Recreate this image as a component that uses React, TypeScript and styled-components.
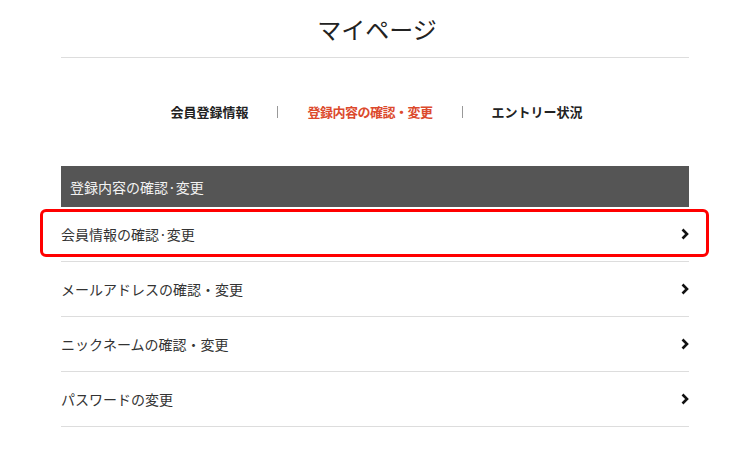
import React from "react";
import styled, { createGlobalStyle } from "styled-components";

const GlobalStyle = createGlobalStyle`
  html, body {
    margin: 0;
    padding: 0;
    background: #fff;
  }
  body {
    font-family: "Noto Sans CJK JP", "Noto Sans", sans-serif;
    color: #333;
  }
`;

const Page = styled.div`
  width: 628px;
  margin: 0 auto;
`;

const Header = styled.header`
  height: 57px;
  border-bottom: 1px solid #ddd;
  display: flex;
  align-items: center;
  justify-content: center;
`;

const Title = styled.h1`
  margin: 0 0 0 4px;
  font-size: 24px;
  font-weight: 400;
  color: #222;
  line-height: 1;
`;

const Nav = styled.nav`
  display: flex;
  align-items: center;
  justify-content: center;
  gap: 29px;
  height: 20px;
  margin: 44px 0 44px 3px;
`;

const NavItem = styled.a<{ $active?: boolean }>`
  font-size: 13px;
  font-weight: 700;
  line-height: 20px;
  text-decoration: none;
  letter-spacing: ${(p) => (p.$active ? "-0.5px" : "0")};
  color: ${(p) => (p.$active ? "#dc4a2d" : "#222")};
`;

const Sep = styled.span`
  width: 1px;
  height: 12px;
  background: #999;
`;

const SectionBar = styled.div`
  height: 41px;
  background: #555;
  color: #f2f2f2;
  font-size: 14px;
  display: flex;
  align-items: center;
  padding-left: 9px;
`;

const List = styled.ul`
  list-style: none;
  margin: 0;
  padding: 0;
`;

const Row = styled.li`
  position: relative;
  height: 54px;
  border-bottom: 1px solid #ddd;
  display: flex;
  align-items: center;
  justify-content: space-between;
  font-size: 14px;
  color: #333;
  padding-bottom: 1px;
  box-sizing: border-box;
  height: 55px;
`;

const Highlight = styled.span`
  position: absolute;
  left: -21px;
  right: -20px;
  top: 2px;
  height: 48px;
  box-sizing: border-box;
  border: 3px solid #f00;
  border-radius: 6px;
  pointer-events: none;
`;

const Chevron = () => (
  <svg width="10" height="12" viewBox="0 0 10 12" style={{ marginRight: "-1px" }}>
    <path d="M2.5 1.5 L7 6 L2.5 10.5" fill="none" stroke="#111" strokeWidth="2.6" />
  </svg>
);

const items = [
  "会員情報の確認·変更",
  "メールアドレスの確認・変更",
  "ニックネームの確認・変更",
  "パスワードの変更",
];

const App = () => (
  <>
    <GlobalStyle />
    <Page>
      <Header>
        <Title>マイページ</Title>
      </Header>
      <Nav>
        <NavItem>会員登録情報</NavItem>
        <Sep />
        <NavItem $active>登録内容の確認・変更</NavItem>
        <Sep />
        <NavItem>エントリー状況</NavItem>
      </Nav>
      <SectionBar>登録内容の確認·変更</SectionBar>
      <List>
        {items.map((label, i) => (
          <Row key={label}>
            <span>{label}</span>
            <Chevron />
            {i === 0 && <Highlight />}
          </Row>
        ))}
      </List>
    </Page>
  </>
);

export default App;
